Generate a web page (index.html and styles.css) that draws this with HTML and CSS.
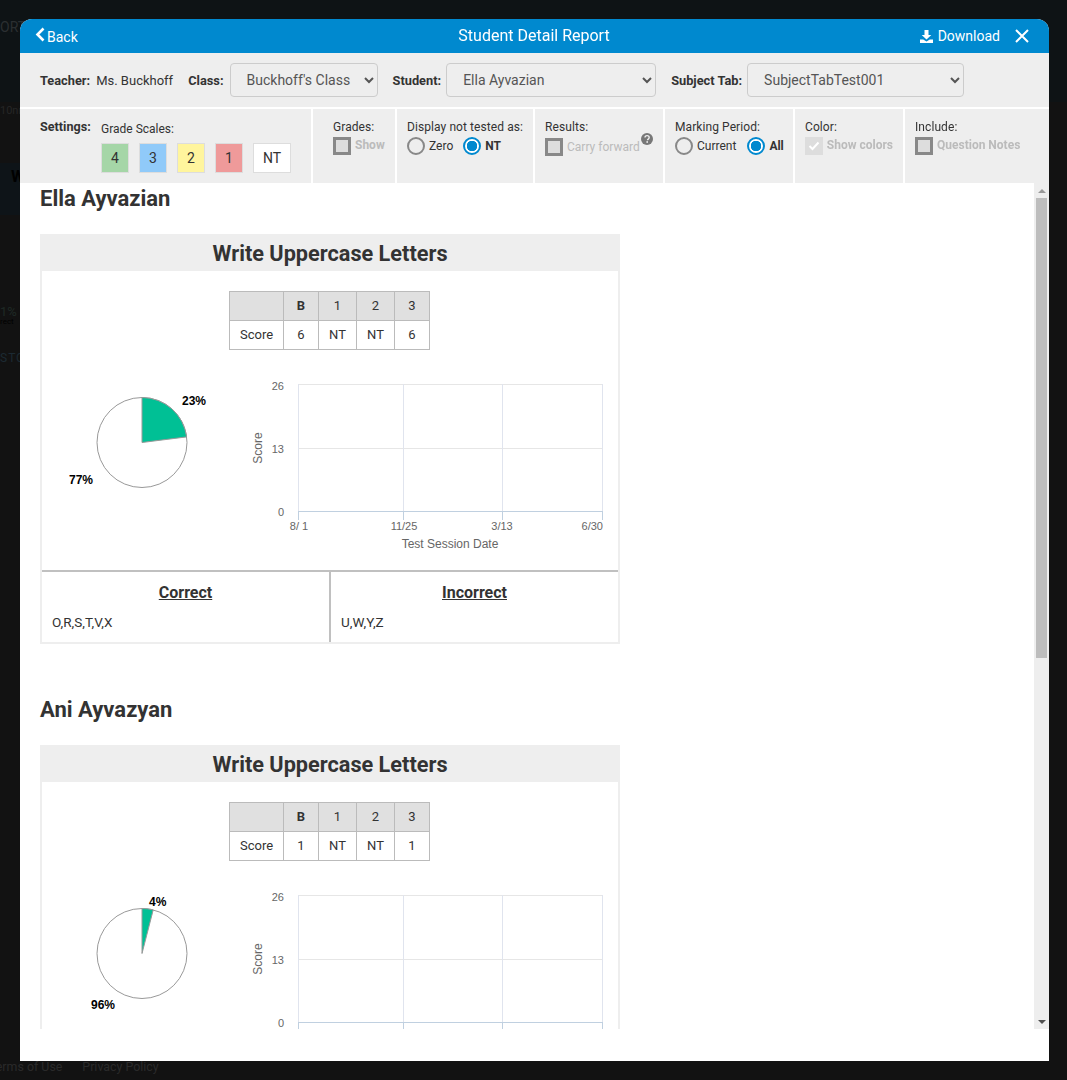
FILE: index.html
```html
<!DOCTYPE html>
<html lang="en">
<head>
    <meta charset="UTF-8">
    <meta name="viewport" content="width=device-width, initial-scale=1.0">
    <title>Student Detail Report</title>
    <link rel="stylesheet" href="styles.css">
</head>
<body>
    <!-- Page behind the dialog, mostly covered -->
    <div class="backdrop">
        <div class="bg-row bg-top">ORT</div>
        <div class="bg-row bg-small">10nn</div>
        <div class="bg-row bg-band">W</div>
        <div class="bg-row bg-percent">1%<small>rect</small></div>
        <div class="bg-row bg-sto">STO</div>
        <div class="bg-footer"><span>Terms of Use</span><span>Privacy Policy</span></div>
    </div>

    <div class="modal">
        <header class="modal-head">
            <a class="back-link">
                <svg width="10" height="15" viewBox="0 0 10 15"><path d="M8.5 1.5 2.5 7.5 8.5 13.5" fill="none" stroke="#fff" stroke-width="2.6"/></svg>
                <span>Back</span>
            </a>
            <h1 class="modal-title">Student Detail Report</h1>
            <a class="download-link">
                <svg width="13" height="13" viewBox="0 0 13 13"><path d="M4.5 0h4v5h2.8L6.5 9.6 1.7 5h2.8zM0 9.5h3.2L6.5 11.5l3.3-2H13V13H0z" fill="#fff"/></svg>
                Download
            </a>
            <svg class="close-icon" width="16" height="16" viewBox="0 0 16 16"><path d="M2 2l12 12M14 2 2 14" stroke="#fff" stroke-width="2"/></svg>
        </header>

        <div class="filters">
            <b class="wide-gap">Teacher:</b><span class="teacher-name">Ms. Buckhoff</span>
            <b class="wide-gap">Class:</b>
            <select class="sel-class"><option>Buckhoff's Class</option></select>
            <b>Student:</b>
            <select class="sel-student"><option>Ella Ayvazian</option></select>
            <b>Subject Tab:</b>
            <select class="sel-subject"><option>SubjectTabTest001</option></select>
        </div>

        <div class="settings">
            <div class="set-col col-scales">
                <b class="settings-label">Settings:</b>
                <div>
                    <div class="scales-label">Grade Scales:</div>
                    <div class="swatches">
                        <span class="swatch s4">4</span>
                        <span class="swatch s3">3</span>
                        <span class="swatch s2">2</span>
                        <span class="swatch s1">1</span>
                        <span class="swatch nt">NT</span>
                    </div>
                </div>
            </div>
            <div class="set-col col-grades">
                <div class="set-title">Grades:</div>
                <label class="opt muted"><input type="checkbox"><b>Show</b></label>
            </div>
            <div class="set-col col-display">
                <div class="set-title">Display not tested as:</div>
                <div class="opts">
                    <label class="opt"><input type="radio" name="nt">Zero</label>
                    <label class="opt"><input type="radio" name="nt" checked><b>NT</b></label>
                </div>
            </div>
            <div class="set-col col-results">
                <div class="set-title">Results:</div>
                <label class="opt muted carry"><input type="checkbox">Carry forward</label>
                <svg class="help-icon" width="12" height="12" viewBox="0 0 12 12"><circle cx="6" cy="6" r="6" fill="#777"/><path d="M4 4.6c0-2.6 4.2-2.6 4.2 0 0 1.5-1.7 1.4-1.7 2.6" fill="none" stroke="#eee" stroke-width="1.4"/><rect x="5.4" y="8.2" width="1.6" height="1.6" fill="#eee"/></svg>
            </div>
            <div class="set-col col-period">
                <div class="set-title">Marking Period:</div>
                <div class="opts">
                    <label class="opt"><input type="radio" name="period">Current</label>
                    <label class="opt"><input type="radio" name="period" checked><b>All</b></label>
                </div>
            </div>
            <div class="set-col col-color">
                <div class="set-title">Color:</div>
                <label class="opt muted"><span class="checked-box"><svg width="12" height="10" viewBox="0 0 12 10"><path d="M1.5 5 4.5 8l6-6.5" fill="none" stroke="#fff" stroke-width="2"/></svg></span><b>Show colors</b></label>
            </div>
            <div class="set-col col-include">
                <div class="set-title">Include:</div>
                <label class="opt muted"><input type="checkbox"><b>Question Notes</b></label>
            </div>
        </div>

        <div class="report">
            <div class="report-body">
                <h2 class="student-name">Ella Ayvazian</h2>
                <section class="card">
                    <h3 class="card-title">Write Uppercase Letters</h3>
                    <table class="score-table">
                        <tr><th></th><th><b>B</b></th><th>1</th><th>2</th><th>3</th></tr>
                        <tr><td class="first">Score</td><td>6</td><td>NT</td><td>NT</td><td>6</td></tr>
                    </table>
                    <div class="charts">
                        <svg class="pie" width="190" height="190" viewBox="0 0 190 190">
                            <circle cx="100" cy="72.5" r="45" fill="#fff" stroke="#999"/>
                            <path d="M100 72.5V27.5A45 45 0 0 1 144.6 66.9Z" fill="#00c095" stroke="#999"/>
                            <text class="pie-label" x="140" y="35">23%</text>
                            <text class="pie-label" x="27" y="114">77%</text>
                        </svg>
                        <svg class="line-chart" width="386" height="190" viewBox="0 0 386 190">
                            <path class="grid-h" d="M66 14.5H371M66 78.5H371"/>
                            <path class="grid-v" d="M66.5 14V141M171.5 14V141M270.5 14V141M370.5 14V141"/>
                            <path class="axis" d="M66 141.5H371M66.5 141V150M171.5 141V150M270.5 141V150M370.5 141V150"/>
                            <text class="tick" x="52" y="20" text-anchor="end">26</text>
                            <text class="tick" x="52" y="83" text-anchor="end">13</text>
                            <text class="tick" x="52" y="146" text-anchor="end">0</text>
                            <text class="tick" x="67" y="160" text-anchor="middle">8/ 1</text>
                            <text class="tick" x="172" y="160" text-anchor="middle">11/25</text>
                            <text class="tick" x="270" y="160" text-anchor="middle">3/13</text>
                            <text class="tick" x="371" y="160" text-anchor="end">6/30</text>
                            <text class="axis-title" x="218" y="178" text-anchor="middle">Test Session Date</text>
                            <text class="axis-title" transform="translate(30 78) rotate(-90)" text-anchor="middle">Score</text>
                        </svg>
                    </div>
                    <div class="answers">
                        <div class="answer-col">
                            <h4>Correct</h4>
                            <p>O,R,S,T,V,X</p>
                        </div>
                        <div class="answer-col">
                            <h4>Incorrect</h4>
                            <p>U,W,Y,Z</p>
                        </div>
                    </div>
                </section>

                <h2 class="student-name second">Ani Ayvazyan</h2>
                <section class="card">
                    <h3 class="card-title">Write Uppercase Letters</h3>
                    <table class="score-table">
                        <tr><th></th><th><b>B</b></th><th>1</th><th>2</th><th>3</th></tr>
                        <tr><td class="first">Score</td><td>1</td><td>NT</td><td>NT</td><td>1</td></tr>
                    </table>
                    <div class="charts">
                        <svg class="pie" width="190" height="190" viewBox="0 0 190 190">
                            <circle cx="100" cy="72.5" r="45" fill="#fff" stroke="#999"/>
                            <path d="M100 72.5V27.5A45 45 0 0 1 111.2 28.9Z" fill="#00c095" stroke="#999"/>
                            <text class="pie-label" x="107" y="25">4%</text>
                            <text class="pie-label" x="49" y="128">96%</text>
                        </svg>
                        <svg class="line-chart" width="386" height="190" viewBox="0 0 386 190">
                            <path class="grid-h" d="M66 14.5H371M66 78.5H371"/>
                            <path class="grid-v" d="M66.5 14V141M171.5 14V141M270.5 14V141M370.5 14V141"/>
                            <path class="axis" d="M66 141.5H371M66.5 141V150M171.5 141V150M270.5 141V150M370.5 141V150"/>
                            <text class="tick" x="52" y="20" text-anchor="end">26</text>
                            <text class="tick" x="52" y="83" text-anchor="end">13</text>
                            <text class="tick" x="52" y="146" text-anchor="end">0</text>
                            <text class="axis-title" transform="translate(30 78) rotate(-90)" text-anchor="middle">Score</text>
                        </svg>
                    </div>
                </section>
            </div>
            <div class="scrollbar">
                <span class="arrow-up"></span>
                <div class="scroll-track"><div class="scroll-thumb"></div></div>
                <span class="arrow-down"></span>
            </div>
        </div>
    </div>
</body>
</html>
```

FILE: styles.css
```css
* {
    box-sizing: border-box;
}
html, body {
    margin: 0;
    height: 100%;
}
body {
    font-family: Roboto, "Liberation Sans", sans-serif;
    font-size: 12px;
    color: #333;
    background-color: #121212;
    overflow: hidden;
}

/* Dimmed page behind the dialog */
.backdrop {
    height: 1080px;
    display: flex;
    flex-direction: column;
    color: #2b2f31;
    overflow: hidden;
    white-space: nowrap;
}
.bg-row {
    width: 20px;
    overflow: hidden;
}
.bg-top {
    height: 102px;
    padding-top: 19px;
    font-size: 14px;
    background-color: #0e1315;
    width: 100%;
}
.bg-small {
    height: 61px;
    padding-top: 2px;
    font-size: 11px;
    color: #262626;
}
.bg-band {
    height: 52px;
    padding: 4px 0 0 11px;
    font-size: 16px;
    font-weight: 700;
    color: #000;
    background-color: #0e1418;
}
.bg-percent {
    height: 135px;
    padding-top: 90px;
    font-size: 13px;
    line-height: 14px;
    color: #1f2a26;
}
.bg-percent small {
    display: block;
    font-size: 8px;
    line-height: 6px;
    color: #000;
}
.bg-sto {
    height: 709px;
    padding-top: 1px;
    font-size: 12px;
    letter-spacing: 1px;
    color: #1c2a33;
}
.bg-footer {
    display: flex;
    gap: 20px;
    margin-left: -11px;
    color: #2a2a2a;
    font-size: 12.4px;
}

/* Dialog */
.modal {
    position: absolute;
    left: 20px;
    top: 19px;
    width: 1029px;
    height: 1042px;
    background-color: #fff;
    border-radius: 12px 12px 0 0;
    overflow: hidden;
    will-change: opacity;
}
.modal-head {
    display: flex;
    align-items: center;
    position: relative;
    height: 34px;
    padding: 0 19px 0 15px;
    background-color: #0089cf;
    color: #fff;
    font-size: 14px;
}
.back-link {
    display: flex;
    align-items: center;
    gap: 2px;
}
.back-link svg {
    margin-top: -3px;
}
.back-link span {
    margin-top: 2px;
}
.modal-title {
    position: absolute;
    left: 0;
    right: 1px;
    top: 8px;
    margin: 0;
    text-align: center;
    font-size: 16px;
    line-height: 18px;
    font-weight: 400;
}
.download-link {
    display: flex;
    align-items: center;
    gap: 5px;
    margin-left: auto;
    margin-right: 14px;
}

.filters {
    display: flex;
    align-items: center;
    height: 54px;
    padding: 0 0 0 20px;
    background-color: #eee;
    font-size: 13px;
}
.filters b {
    flex: none;
    margin-right: 5px;
    font-size: 12.8px;
}
.filters b.wide-gap {
    margin-right: 6px;
}
.teacher-name {
    margin-right: 15px;
}
.filters select {
    height: 34px;
    margin-right: 15px;
    padding: 0 8px 0 12px;
    border: 1px solid #ccc;
    border-radius: 4px;
    background-color: #eee;
    color: #555;
    font-family: Roboto, sans-serif;
    font-size: 14px;
}
.sel-class {
    width: 148px;
}
.sel-student {
    width: 210px;
}
.sel-subject {
    width: 217px;
}

.settings {
    display: flex;
    gap: 2px;
    height: 76px;
    padding-top: 2px;
    background-color: #fff;
}
.set-col {
    position: relative;
    padding: 10px 10px 0;
    background-color: #eee;
    white-space: nowrap;
}
.col-scales {
    display: flex;
    width: 291px;
    padding: 10px 0 0 20px;
}
.settings-label {
    width: 61px;
    font-size: 12.6px;
}
.scales-label {
    margin-top: 3px;
}
.swatches {
    display: flex;
    gap: 10px;
    margin-top: 7px;
}
.swatch {
    width: 28px;
    height: 30px;
    display: flex;
    align-items: center;
    justify-content: center;
    border: 1px solid #ddd;
    font-size: 14px;
}
.s4 { background-color: #a5d6a7; }
.s3 { background-color: #90caf9; }
.s2 { background-color: #fff59d; }
.s1 { background-color: #ef9a9a; }
.nt {
    width: 38px;
    background-color: #fff;
}
.col-grades { width: 82px; padding-left: 20px; }
.col-display { width: 136px; }
.col-results { width: 128px; }
.col-period { width: 128px; }
.col-color { width: 108px; }
.col-include { flex: 1; }
.set-title {
    line-height: 16px;
    letter-spacing: .08px;
}
.opts {
    display: flex;
    gap: 10px;
}
.col-period .opts {
    gap: 11px;
}
.opt {
    display: flex;
    align-items: center;
    gap: 4px;
    height: 20px;
    margin-top: 1px;
}
.opt b {
    font-weight: 700;
}
.muted {
    color: #bbb;
}
.muted b {
    margin-top: -2px;
}
.opt input {
    appearance: none;
    flex: none;
    margin: 0;
    width: 18px;
    height: 18px;
}
input[type="checkbox"] {
    border: 3px solid #888;
    background-color: #ddd;
}
input[type="radio"] {
    border: 2px solid #888;
    border-radius: 50%;
    background-color: #eee;
}
input[type="radio"]:checked {
    border-color: #0089cf;
    background: radial-gradient(circle, #0089cf 0 5px, #fff 5.5px);
    border-width: 2.5px;
}
.checked-box {
    display: flex;
    align-items: center;
    justify-content: center;
    width: 18px;
    height: 18px;
    background-color: #ddd;
}
.carry {
    margin-top: 2px;
}
.help-icon {
    position: absolute;
    left: 106px;
    top: 24px;
}

/* Report area */
.report {
    display: flex;
    height: 846px;
    overflow: hidden;
}
.report-body {
    flex: 1;
    padding-left: 20px;
    overflow: hidden;
}
.scrollbar {
    display: flex;
    flex-direction: column;
    align-items: center;
    width: 15px;
    background-color: #eee;
}
.arrow-up, .arrow-down {
    flex: none;
    width: 0;
    height: 0;
    border-left: 4px solid transparent;
    border-right: 4px solid transparent;
}
.arrow-up {
    margin-top: 6px;
    border-bottom: 4px solid #999;
}
.arrow-down {
    margin-bottom: 5px;
    border-top: 4px solid #505050;
}
.scroll-track {
    flex: 1;
    width: 100%;
    padding: 5px 2px 0;
}
.scroll-thumb {
    height: 460px;
    background-color: #bdbdbd;
}

.student-name {
    margin: 3px 0 20px;
    height: 28px;
    line-height: 26px;
    font-size: 22px;
    font-weight: 700;
}
.student-name.second {
    margin-top: 53px;
}
.card {
    width: 580px;
    border: 2px solid #eee;
    border-top-width: 1px;
}
.card-title {
    margin: 0;
    height: 36px;
    line-height: 38px;
    background-color: #eee;
    text-align: center;
    font-size: 21.7px;
    font-weight: 700;
}
.score-table {
    margin: 20px 0 0 187px;
    border-collapse: collapse;
    font-size: 13px;
}
.score-table th, .score-table td {
    height: 29px;
    min-width: 38px;
    padding: 0 0 1px;
    border: 1px solid #bbb;
    text-align: center;
    font-weight: 400;
}
.score-table th {
    background-color: #e0e0e0;
}
.score-table th:nth-child(2), .score-table td:nth-child(2) {
    min-width: 35px;
}
.score-table th:last-child, .score-table td:last-child {
    min-width: 35px;
}
.score-table .first {
    min-width: 54px;
}
.score-table th b {
    font-weight: 700;
}
.charts {
    display: flex;
    height: 190px;
    margin-top: 20px;
}
.pie-label {
    font-family: "Liberation Sans", sans-serif;
    font-size: 12px;
    font-weight: 700;
    fill: #000;
}
.tick {
    font-family: "Liberation Sans", sans-serif;
    font-size: 11px;
    fill: #666;
}
.axis-title {
    font-family: "Liberation Sans", sans-serif;
    font-size: 12px;
    fill: #666;
}
.grid-h {
    fill: none;
    stroke: #e6e6e6;
}
.grid-v {
    fill: none;
    stroke: #e0e4ee;
}
.axis {
    fill: none;
    stroke: #c0d0e0;
}
.answers {
    display: grid;
    grid-template-columns: 287px 1fr;
    margin-top: 10px;
    border-top: 2px solid #c0c0c0;
}
.answer-col {
    height: 70px;
    padding: 0 10px;
}
.answer-col + .answer-col {
    border-left: 2px solid #c0c0c0;
}
.answer-col h4 {
    margin: 11px 0 12px;
    text-align: center;
    text-decoration: underline;
    font-size: 16px;
    font-weight: 700;
    line-height: 19px;
}
.answer-col p {
    margin: 0;
    font-size: 13.5px;
    line-height: 16px;
}
```
